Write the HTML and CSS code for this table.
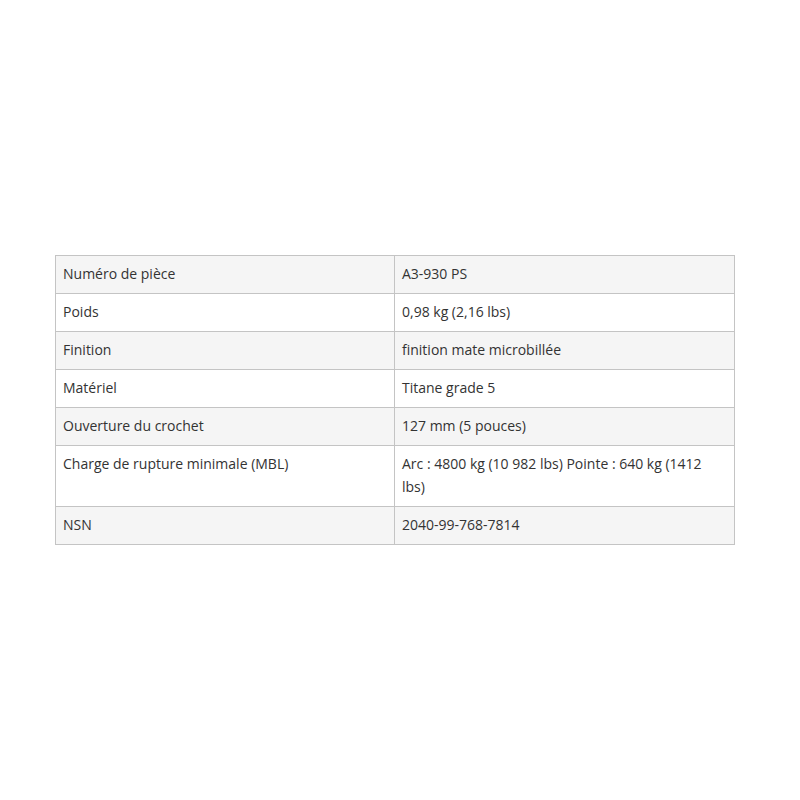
FILE: index.html
```html
<!DOCTYPE html>
<html lang="fr">
<head>
<meta charset="utf-8">
<title>Caractéristiques</title>
<link rel="stylesheet" href="styles.css">
</head>
<body>
<main class="page">
  <table class="specs">
    <colgroup>
      <col class="col-label">
      <col class="col-value">
    </colgroup>
    <tbody>
      <tr><td>Numéro de pièce</td><td>A3-930 PS</td></tr>
      <tr><td>Poids</td><td>0,98 kg (2,16 lbs)</td></tr>
      <tr><td>Finition</td><td>finition mate microbillée</td></tr>
      <tr><td>Matériel</td><td>Titane grade 5</td></tr>
      <tr><td>Ouverture du crochet</td><td>127 mm (5 pouces)</td></tr>
      <tr><td>Charge de rupture minimale (MBL)</td><td>Arc : 4800 kg (10 982 lbs) Pointe : 640 kg (1412 lbs)</td></tr>
      <tr><td>NSN</td><td>2040-99-768-7814</td></tr>
    </tbody>
  </table>
</main>
</body>
</html>
```

FILE: styles.css
```css
html, body {
  margin: 0;
  padding: 0;
  background: #ffffff;
}

.page {
  min-height: 100vh;
  display: flex;
  align-items: center;
  justify-content: flex-start;
  padding-left: 55px;
  box-sizing: border-box;
}

.specs {
  width: 680px;
  border-collapse: collapse;
  table-layout: fixed;
  font-family: "Open Sans", "Noto Sans", sans-serif;
  font-size: 14px;
  line-height: 23px;
  color: #333333;
}

.col-label {
  width: 339px;
}

.specs td {
  border: 1px solid #c4c4c4;
  padding: 6px 7px 8px 7px;
  vertical-align: top;
}

.specs tr:nth-child(odd) td {
  background: #f5f5f5;
}
```
